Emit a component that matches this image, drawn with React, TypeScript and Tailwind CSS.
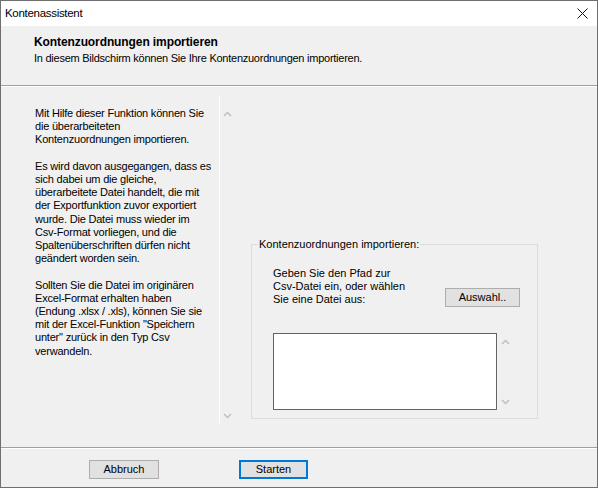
import React from 'react';

const font = { fontFamily: '"Liberation Sans", Arial, sans-serif' };

const ChevronUp = () => (
  <svg width="9" height="6" viewBox="0 0 9 6" className="text-[#bfbfbf]">
    <path d="M1 5 L4.5 1.5 L8 5" fill="none" stroke="currentColor" strokeWidth="1.5" />
  </svg>
);

const ChevronDown = () => (
  <svg width="9" height="6" viewBox="0 0 9 6" className="text-[#bfbfbf]">
    <path d="M1 1 L4.5 4.5 L8 1" fill="none" stroke="currentColor" strokeWidth="1.5" />
  </svg>
);

const WinButton: React.FC<{ label: string; className?: string }> = ({ label, className = '' }) => (
  <button
    className={`flex items-center justify-center bg-[#e1e1e1] text-[11px] text-black border border-[#adadad] ${className}`}
  >
    {label}
  </button>
);

export default function App() {
  return (
    <div
      className="w-[598px] h-[488px] border border-[#6f6f6f] bg-[#f0f0f0] flex flex-col text-black overflow-hidden"
      style={font}
    >
      {/* title bar */}
      <div className="h-[25px] bg-white flex items-center justify-between pl-[4px] pr-[9px] shrink-0">
        <span className="text-[11.5px] tracking-[-0.3px]">Kontenassistent</span>
        <svg width="11" height="11" viewBox="0 0 11 11">
          <path d="M0.5 0.5 L10.5 10.5 M10.5 0.5 L0.5 10.5" stroke="#111" strokeWidth="1" />
        </svg>
      </div>

      {/* header */}
      <div className="h-[59px] shrink-0 pl-[33px] pt-[8px]">
        <div className="text-[12px] font-bold leading-[16px] tracking-[-0.1px]">
          Kontenzuordnungen importieren
        </div>
        <div className="text-[11px] leading-[16px] tracking-[-0.25px]">
          In diesem Bildschirm können Sie Ihre Kontenzuordnungen importieren.
        </div>
      </div>
      <div className="h-[2px] shrink-0 border-t border-[#a0a0a0] border-b border-b-white" />

      {/* body */}
      <div className="h-[360px] shrink-0 flex pt-[8px]">
        <div className="w-[191px] h-[328px] ml-[28px] pl-[6px] pt-[12px] border-r border-white text-[11px] leading-[13.2px] tracking-[-0.2px]">
          <p>
            Mit Hilfe dieser Funktion können Sie
            <br />
            die überarbeiteten
            <br />
            Kontenzuordnungen importieren.
          </p>
          <p className="mt-[13.2px]">
            Es wird davon ausgegangen, dass es
            <br />
            sich dabei um die gleiche,
            <br />
            überarbeitete Datei handelt, die mit
            <br />
            der Exportfunktion zuvor exportiert
            <br />
            wurde. Die Datei muss wieder im
            <br />
            Csv-Format vorliegen, und die
            <br />
            Spaltenüberschriften dürfen nicht
            <br />
            geändert worden sein.
          </p>
          <p className="mt-[13.2px]">
            Sollten Sie die Datei im originären
            <br />
            Excel-Format erhalten haben
            <br />
            (Endung .xlsx / .xls), können Sie sie
            <br />
            mit der Excel-Funktion "Speichern
            <br />
            unter" zurück in den Typ Csv
            <br />
            verwandeln.
          </p>
        </div>
        <div className="w-[15px] h-[328px] flex flex-col items-center justify-between pt-[16px] pb-[4px]">
          <ChevronUp />
          <ChevronDown />
        </div>

        {/* group box */}
        <fieldset className="ml-[16px] mt-[143px] w-[287px] h-[181px] border border-[#dcdcdc] self-start">
          <legend className="ml-[6px] px-[1px] text-[11px] leading-[13px]">
            Kontenzuordnungen importieren:
          </legend>
          <div className="flex items-end pl-[21px] pr-[17px] pt-[16px]">
            <div className="text-[11px] leading-[13.2px]">
              Geben Sie den Pfad zur
              <br />
              Csv-Datei ein, oder wählen
              <br />
              Sie eine Datei aus:
            </div>
            <WinButton label="Auswahl.." className="ml-auto w-[75px] h-[19px]" />
          </div>
          <div className="flex pl-[21px] mt-[26px]">
            <div className="w-[224px] h-[77px] bg-white border border-[#646464]" />
            <div className="w-[16px] h-[77px] flex flex-col items-center justify-between pt-[6px] pb-[5px]">
              <ChevronUp />
              <ChevronDown />
            </div>
          </div>
        </fieldset>
      </div>

      <div className="h-[2px] shrink-0 border-t border-[#a0a0a0] border-b border-b-white" />

      {/* footer */}
      <div className="flex-1 flex pl-[88px] pt-[11px]">
        <WinButton label="Abbruch" className="w-[70px] h-[19px]" />
        <button className="ml-[80px] w-[69px] h-[19px] flex items-center justify-center bg-[#e1e1e1] text-[11px] text-black border-2 border-[#0078d7]">
          Starten
        </button>
      </div>
    </div>
  );
}
